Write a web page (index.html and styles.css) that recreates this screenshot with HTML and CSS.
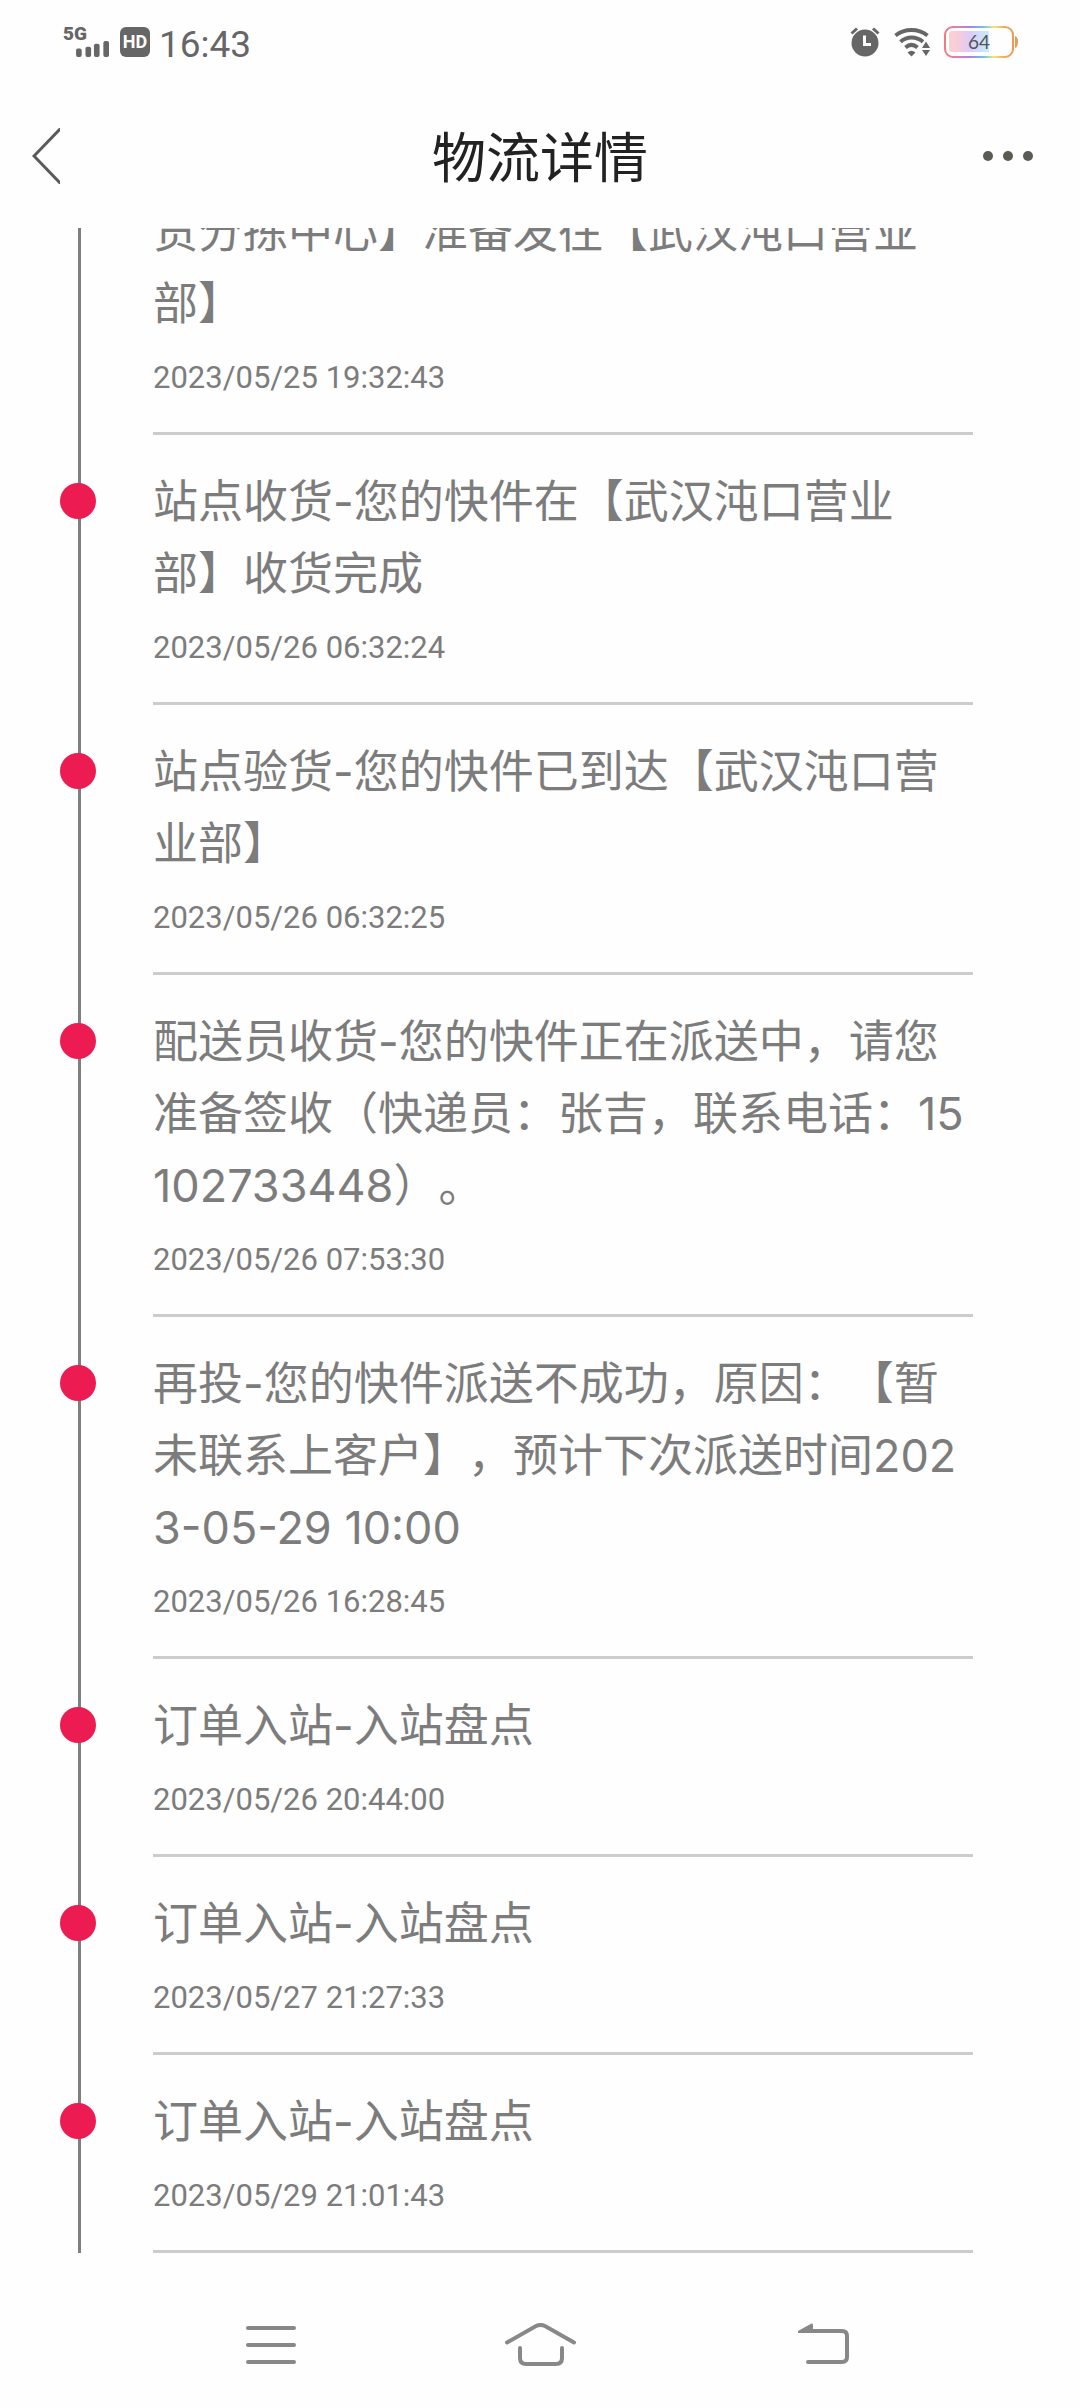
FILE: index.html
```html
<!DOCTYPE html>
<html lang="zh-CN">
<head>
    <meta charset="UTF-8">
    <meta name="viewport" content="width=device-width, initial-scale=1.0">
    <title>物流详情</title>
    <link rel="stylesheet" href="styles.css">
</head>
<body>

    <div class="status-bar">
        <div class="status-left">
            <div class="signal">
                <span class="network">5G</span>
                <svg class="bars" width="36" height="17" viewBox="0 0 36 17" aria-hidden="true">
                    <rect x="0" y="8" width="6" height="9" rx="2"/>
                    <rect x="10" y="6" width="6" height="11" rx="2"/>
                    <rect x="19" y="3" width="6" height="14" rx="2"/>
                    <rect x="29" y="0" width="6" height="17" rx="2"/>
                </svg>
            </div>
            <span class="hd">HD</span>
            <span class="clock">16:43</span>
        </div>
        <div class="status-right">
            <svg width="30" height="30" viewBox="0 0 30 30" aria-hidden="true">
                <circle cx="15" cy="16" r="13.5" fill="#666"/>
                <path d="M1.5 6.500 7 1.500M28.500 6.500 23 1.500" stroke="#666" stroke-width="3"/>
                <path d="M14.500 8.500V17.500H21" fill="none" stroke="#fff" stroke-width="3"/>
            </svg>
            <svg width="36" height="30" viewBox="0 0 36 30" aria-hidden="true">
                <g fill="none" stroke="#666" stroke-width="4">
                    <path d="M1.500 8.500C11 1.300 24 1.300 33.500 8.500"/>
                    <path d="M6.500 14.800C13 9.200 22 9.200 29 14.800"/>
                    <path d="M11.500 20.500C15.500 17 19.500 17 23.500 20.500"/>
                </g>
                <path d="M13.500 25.500Q17.500 22 21.500 25.500L17.500 29.500Z" fill="#666"/>
                <path d="M28 21 32 14.500 36 21ZM28 23 32 29 36 23Z" fill="#666"/>
            </svg>
            <div class="battery">
                <svg width="76" height="32" viewBox="0 0 76 32" aria-hidden="true">
                    <defs>
                        <linearGradient id="rim">
                            <stop offset="0" stop-color="#ee7b86"/>
                            <stop offset="0.200" stop-color="#e27fa6"/>
                            <stop offset="0.370" stop-color="#a884e0"/>
                            <stop offset="0.570" stop-color="#6cc4ee"/>
                            <stop offset="0.720" stop-color="#f0e873"/>
                            <stop offset="0.880" stop-color="#f3a860"/>
                            <stop offset="1" stop-color="#ea9a55"/>
                        </linearGradient>
                        <linearGradient id="charge">
                            <stop offset="0" stop-color="#fbd0d0"/>
                            <stop offset="0.250" stop-color="#f6ccdc"/>
                            <stop offset="0.500" stop-color="#dccbf8"/>
                            <stop offset="1" stop-color="#c8ecfb"/>
                        </linearGradient>
                    </defs>
                    <rect x="1" y="1" width="68" height="30" rx="8" fill="none" stroke="url(#rim)" stroke-width="2"/>
                    <path d="M8 5H45V26H8Q5 26 5 23V8Q5 5 8 5Z" fill="url(#charge)"/>
                    <path d="M71 10Q74 11 74 16Q74 21 71 22Z" fill="#ea9a55"/>
                </svg>
                <span class="battery-level">64</span>
            </div>
        </div>
    </div>

    <header class="title-bar">
        <button type="button" class="icon-button" aria-label="返回">
            <svg width="28" height="56" viewBox="0 0 28 56">
                <path d="M30-1 2 28 30 57" fill="none" stroke="#5a5a5a" stroke-width="3"/>
            </svg>
        </button>
        <h1>物流详情</h1>
        <button type="button" class="icon-button more" aria-label="更多">
            <svg width="50" height="10" viewBox="0 0 50 10" fill="#5b5b53">
                <circle cx="5" cy="5" r="5"/>
                <circle cx="25" cy="5" r="5"/>
                <circle cx="45" cy="5" r="5"/>
            </svg>
        </button>
    </header>

    <!-- Scrolled to the newest record -->
    <main class="tracking">
        <ol class="timeline">
            <li class="record continued">
                <p>货分拣中心】准备发往【武汉沌口营业部】</p>
                <time datetime="2023-05-25T19:32:43">2023/05/25 19:32:43</time>
            </li>
            <li class="record">
                <p>站点收货-您的快件在【武汉沌口营业部】收货完成</p>
                <time datetime="2023-05-26T06:32:24">2023/05/26 06:32:24</time>
            </li>
            <li class="record">
                <p>站点验货-您的快件已到达【武汉沌口营业部】</p>
                <time datetime="2023-05-26T06:32:25">2023/05/26 06:32:25</time>
            </li>
            <li class="record">
                <p>配送员收货-您的快件正在派送中，请您准备签收（快递员：张吉，联系电话：15102733448）。</p>
                <time datetime="2023-05-26T07:53:30">2023/05/26 07:53:30</time>
            </li>
            <li class="record">
                <p>再投-您的快件派送不成功，原因：【暂未联系上客户】，预计下次派送时间2023-05-29 10:00</p>
                <time datetime="2023-05-26T16:28:45">2023/05/26 16:28:45</time>
            </li>
            <li class="record">
                <p>订单入站-入站盘点</p>
                <time datetime="2023-05-26T20:44:00">2023/05/26 20:44:00</time>
            </li>
            <li class="record">
                <p>订单入站-入站盘点</p>
                <time datetime="2023-05-27T21:27:33">2023/05/27 21:27:33</time>
            </li>
            <li class="record">
                <p>订单入站-入站盘点</p>
                <time datetime="2023-05-29T21:01:43">2023/05/29 21:01:43</time>
            </li>
        </ol>
    </main>

    <nav class="system-nav" aria-label="系统导航">
        <button type="button" class="icon-button" aria-label="最近任务">
            <svg width="80" height="44" viewBox="0 0 80 44">
                <path d="M18 5H64M18 22H64M18 39H64"/>
            </svg>
        </button>
        <button type="button" class="icon-button" aria-label="主屏幕">
            <svg width="80" height="44" viewBox="0 0 80 44">
                <path d="M7 19.500 36 3Q40.500 1 45 3L74 19.500"/>
                <path d="M20 25V35Q20 41 26 41H56Q62 41 62 35V25"/>
            </svg>
        </button>
        <button type="button" class="icon-button" aria-label="返回上一级">
            <svg width="80" height="44" viewBox="0 0 80 44">
                <path d="M38 39H72Q77 39 77 34V13Q77 8 72 8H34"/>
                <path class="solid" d="M28 10V8L41.500 0.500Q43 0 43 2V10Z"/>
            </svg>
        </button>
    </nav>

</body>
</html>
```

FILE: styles.css
```css
* {
    box-sizing: border-box;
}

body {
    margin: 0;
    height: 100vh;
    display: flex;
    flex-direction: column;
    background-color: #fefefe;
    color: #7c7c7c;
    font-family: Inter, "Noto Sans CJK SC", sans-serif;
}

svg {
    display: block;
}

.icon-button {
    padding: 0;
    border: none;
    background: none;
    cursor: pointer;
}

/* Status bar */
.status-bar {
    display: flex;
    justify-content: space-between;
    align-items: center;
    height: 84px;
    padding: 0 60px 0 63px;
    color: #666;
    font-family: Roboto, sans-serif;
}

.status-left,
.status-right {
    display: flex;
    align-items: center;
}

.status-left {
    gap: 9px;
}

.status-right {
    gap: 14px;
}

.signal {
    display: flex;
    flex-direction: column;
    width: 48px;
    height: 30px;
}

.network {
    font-size: 19px;
    font-weight: 900;
    line-height: 14px;
}

.bars {
    margin-left: 12px;
    fill: #666;
}

.hd {
    width: 30px;
    height: 30px;
    border-radius: 6px;
    background-color: #666;
    color: #fff;
    font-size: 18px;
    font-weight: 700;
    line-height: 30px;
    text-align: center;
}

.clock {
    font-size: 37px;
    line-height: 44px;
    padding-top: 6px;
}

.battery {
    position: relative;
}

/* Charge number over the battery */
.battery-level {
    position: absolute;
    top: 0;
    left: 0;
    width: 70px;
    color: #555;
    font-family: Lato, sans-serif;
    font-size: 19px;
    line-height: 32px;
    text-align: center;
}

/* Title bar */
.title-bar {
    display: grid;
    grid-template-columns: 1fr auto 1fr;
    align-items: center;
    height: 144px;
    padding: 0 47px 0 32px;
}

.title-bar h1 {
    margin: 0 0 0 15px;
    padding-top: 6px;
    color: #222;
    font-size: 54px;
    font-weight: 400;
    line-height: 80px;
}

.title-bar .icon-button {
    justify-self: start;
}

.title-bar .more {
    justify-self: end;
}

/* Tracking records */
.tracking {
    flex: 1;
    min-height: 0;
    display: flex;
    flex-direction: column;
    justify-content: flex-end;
    overflow: hidden;
}

.timeline {
    margin: 0 107px 0 78px;
    padding: 0 0 0 72px;
    border-left: 3px solid #7f7f7f;
    list-style: none;
}

.record {
    position: relative;
    padding: 31px 0 30px;
    border-bottom: 3px solid #ccc;
}

/* Dot on the line */
.record::before {
    content: "";
    position: absolute;
    top: 48px;
    left: -93px;
    width: 36px;
    height: 36px;
    border-radius: 50%;
    background-color: #ec1c52;
}

.record.continued::before {
    display: none;
}

.record p {
    margin: 0 0 14px;
    font-size: 45px;
    line-height: 72px;
    word-break: break-all;
    text-spacing-trim: space-all;
}

.record time {
    display: block;
    font-family: Roboto, sans-serif;
    font-size: 31px;
    line-height: 48px;
}

/* System navigation */
.system-nav {
    display: grid;
    grid-template-columns: repeat(3, 1fr);
    justify-items: center;
    padding: 70px 135px 41px;
}

.system-nav path {
    fill: none;
    stroke: #888;
    stroke-width: 4;
    stroke-linecap: round;
}

.system-nav .solid {
    fill: #888;
    stroke: none;
}
```
